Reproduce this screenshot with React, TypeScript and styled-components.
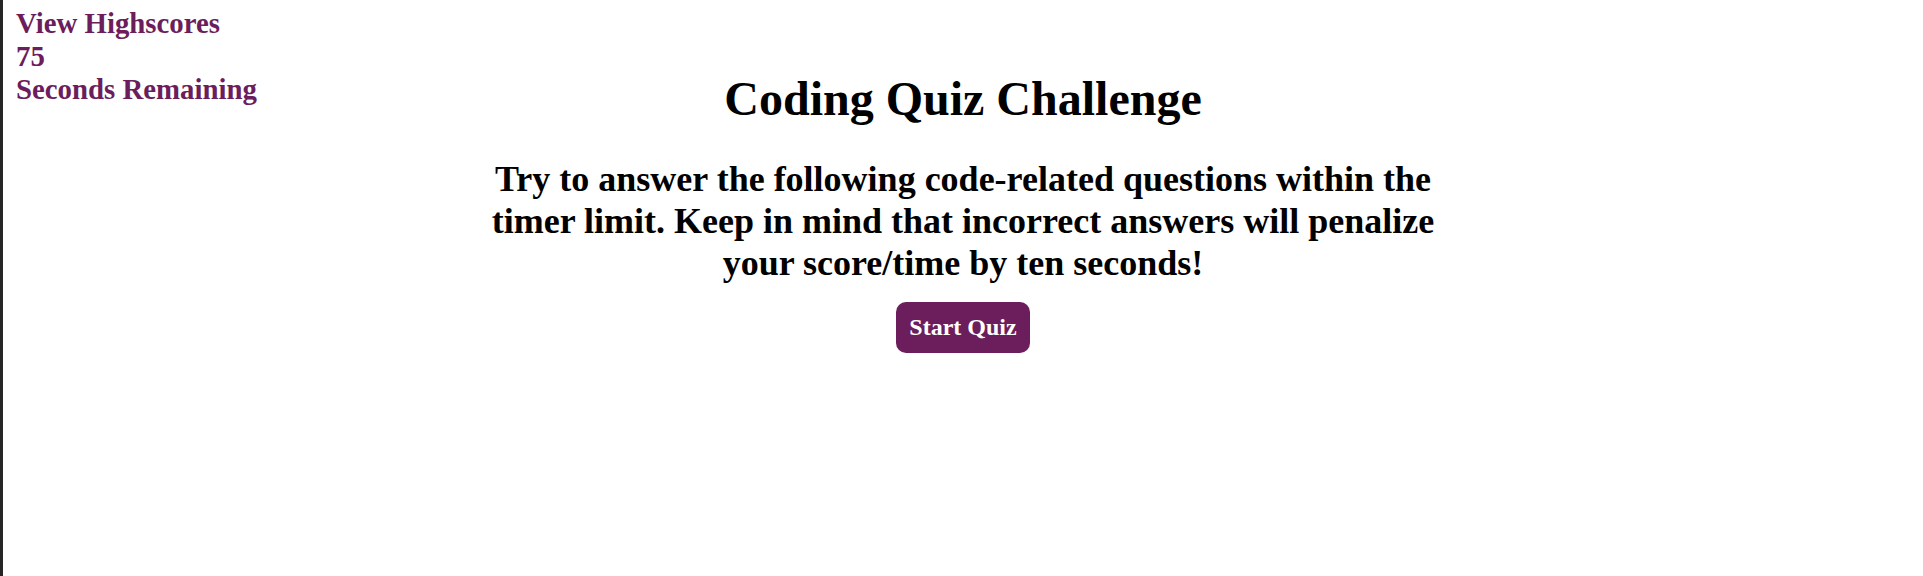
import React from 'react'
import styled, { createGlobalStyle } from 'styled-components'

const GlobalStyle = createGlobalStyle`
    html, body {
        margin: 0;
        padding: 0;
        background: #ffffff;
    }
    body {
        font-family: "Liberation Serif", "Times New Roman", serif;
    }
`

const Page = styled.div`
    min-height: 576px;
    box-sizing: border-box;
    border-left: 3px solid #262626;
    display: grid;
    grid-template-columns: 1fr 960px 1fr;
    align-items: start;
`

const Header = styled.header`
    padding: 7px 13px 0;
    display: flex;
    flex-direction: column;
    color: #6b1e5b;
    font-size: 28.8px;
    font-weight: bold;
`

const HeaderLink = styled.a`
    color: inherit;
    text-decoration: none;
    cursor: pointer;
`

const Timer = styled.span``

const Main = styled.main`
    display: flex;
    flex-direction: column;
    align-items: center;
    text-align: center;
    padding-top: 71px;
`

const Title = styled.h1`
    margin: 0 0 32px;
    font-size: 48px;
    font-weight: bold;
    color: #000000;
`

const Intro = styled.p`
    margin: 0 0 18px;
    font-size: 36px;
    font-weight: bold;
    color: #000000;
`

const StartButton = styled.button`
    font-family: "Liberation Serif", "Times New Roman", serif;
    font-size: 24px;
    font-weight: bold;
    color: #ffffff;
    background: #6b1e5b;
    border: none;
    border-radius: 10px;
    padding: 12px 13px;
    cursor: pointer;
`

export default function App() {
    return (
        <>
            <GlobalStyle />
            <Page>
                <Header>
                    <HeaderLink>View Highscores</HeaderLink>
                    <Timer>75</Timer>
                    <Timer>Seconds Remaining</Timer>
                </Header>
                <Main>
                    <Title>Coding Quiz Challenge</Title>
                    <Intro>
                        Try to answer the following code-related questions within the timer limit. Keep in mind that incorrect answers will penalize your score/time by ten seconds!
                    </Intro>
                    <StartButton>Start Quiz</StartButton>
                </Main>
            </Page>
        </>
    )
}
